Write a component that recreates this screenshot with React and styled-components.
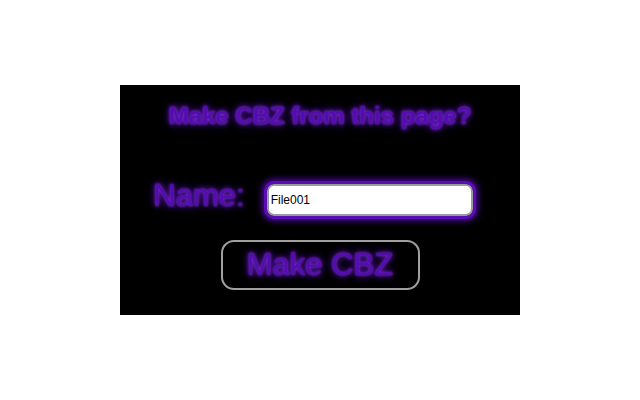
import { styled, createGlobalStyle } from "styled-components";

const Global = createGlobalStyle`
  html, body {
    margin: 0;
    padding: 0;
    background: #fff;
  }
  #root {
    width: 640px;
    height: 400px;
    display: flex;
    align-items: center;
    justify-content: center;
  }
`;

const glow = "0 0 3px #7a3ad6, 0 0 6px #5f18b8, 0 0 10px #4c0c9c";

const App = () => {
  return (
    <>
      <Global />
      <Panel>
        <Title>Make CBZ from this page?</Title>
        <NameRow>
          <Label>Name:</Label>
          <NameInput defaultValue="File001" />
        </NameRow>
        <MakeButton>Make CBZ</MakeButton>
      </Panel>
    </>
  );
};

export default App;

const Panel = styled.div`
  width: 400px;
  height: 230px;
  background: #000;
  display: flex;
  flex-direction: column;
  align-items: center;
  box-sizing: border-box;
  padding-top: 16px;
  font-family: "Liberation Sans", Arial, sans-serif;
`;

const Title = styled.div`
  color: #560bb0;
  font-size: 24px;
  font-weight: bold;
  text-shadow: ${glow};
  line-height: 30px;
`;

const NameRow = styled.div`
  display: flex;
  align-items: center;
  gap: 22px;
  margin-top: 53px;
  margin-left: -14px;
`;

const Label = styled.div`
  color: #560bb0;
  font-size: 31px;
  text-shadow: ${glow};
  line-height: 34px;
  margin-top: -9px;
`;

const NameInput = styled.input`
  width: 206px;
  height: 32px;
  box-sizing: border-box;
  border: 2px solid #9a9a9a;
  border-radius: 7px;
  background: #fff;
  padding: 0 2px;
  font-family: "Liberation Sans", Arial, sans-serif;
  font-size: 12px;
  color: #000;
  outline: 3px solid #5a0db4;
  box-shadow: 0 0 6px 5px #4a0a9c;
`;

const MakeButton = styled.button`
  margin-top: 24px;
  width: 199px;
  height: 50px;
  box-sizing: border-box;
  background: transparent;
  border: 2px solid #a0a0a0;
  border-radius: 13px;
  color: #560bb0;
  font-family: "Liberation Sans", Arial, sans-serif;
  font-size: 31px;
  text-shadow: ${glow};
  cursor: pointer;
  padding: 0;
`;
